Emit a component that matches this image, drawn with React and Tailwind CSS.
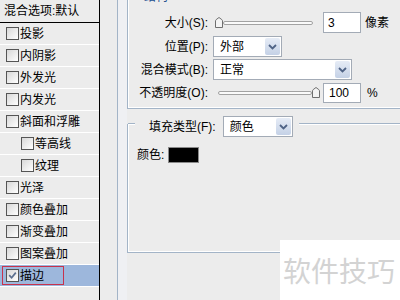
import React from "react";

// layer style list on the left
const effects = [
  { name: "投影" },
  { name: "内阴影" },
  { name: "外发光" },
  { name: "内发光" },
  { name: "斜面和浮雕" },
  { name: "等高线", sub: true },
  { name: "纹理", sub: true },
  { name: "光泽" },
  { name: "颜色叠加" },
  { name: "渐变叠加" },
  { name: "图案叠加" },
  { name: "描边", checked: true, active: true },
];

const CheckBox = ({ checked }) => (
  <span className="w-[13px] h-[13px] shrink-0 border border-[#555] bg-linear-to-br from-[#d8d8d8] to-white flex items-center justify-center">
    {checked && (
      <svg width="9" height="9" viewBox="0 0 9 9">
        <path d="M1.2 4.2 L3.6 6.8 L7.8 1.6" stroke="#5b6f8f" strokeWidth="1.7" fill="none" />
      </svg>
    )}
  </span>
);

const Thumb = () => (
  <svg width="8" height="11" viewBox="0 0 8 11" className="shrink-0">
    <path d="M0.5 4 Q0.5 3.2 1.2 2.6 L4 0.5 L6.8 2.6 Q7.5 3.2 7.5 4 V10.5 H0.5 Z" fill="#f4f4f4" stroke="#6f6f6f" />
  </svg>
);

const Track = () => (
  <div className="flex-1 h-[4px] rounded-full border border-[#a2a2a2] bg-[#fafafa]" />
);

const Select = ({ value, className }) => (
  <div className={`h-[21px] border border-[#a3abb6] bg-white flex items-center ${className}`}>
    <span className="flex-1 pl-[6px]">{value}</span>
    <span className="w-[15px] h-[17px] mr-[1px] rounded-[2px] bg-linear-to-b from-[#e6ecf6] to-[#c4d1e6] flex items-center justify-center">
      <svg width="9" height="6" viewBox="0 0 9 6">
        <path d="M1 1 L4.5 4.5 L8 1" stroke="#4f6386" strokeWidth="1.8" fill="none" />
      </svg>
    </span>
  </div>
);

const Line = ({ className = "" }) => (
  <div className={`h-[2px] border-t border-[#a3b4c7] border-b border-b-white ${className}`} />
);

export default function App() {
  return (
    <div className="relative w-[400px] h-[300px] overflow-hidden bg-[#ececec] flex text-[12px] leading-[14px] text-black font-['Liberation_Sans','Noto_Sans_CJK_SC',sans-serif]">
      {/* Left: style list */}
      <div className="w-[100px] shrink-0 border-r border-black flex flex-col">
        <div className="h-[23px] border-b border-black pl-[4px] flex items-center">
          混合选项:默认
        </div>
        {effects.map((e) => (
          <div
            key={e.name}
            className={`h-[22px] border-b border-white flex items-center ${
              e.active ? "bg-[#9db7dc]" : ""
            } ${e.sub ? "pl-[21px]" : "pl-[6px]"}`}
          >
            {e.active ? (
              <div className="-ml-[4px] w-[62px] h-[19px] border border-[#c7324d] pl-[3px] flex items-center gap-[1px]">
                <CheckBox checked />
                <span>{e.name}</span>
              </div>
            ) : (
              <div className="flex items-center gap-[1px]">
                <CheckBox checked={e.checked} />
                <span>{e.name}</span>
              </div>
            )}
          </div>
        ))}
      </div>

      {/* Right: stroke settings */}
      <div className="flex-1 ml-[17px] border-l border-[#a3b4c7] flex">
        <div className="w-[9px] shrink-0 bg-[#eff0f3]" />
        <div className="flex flex-col">
          {/* Structure group */}
          <div className="w-[300px] h-[119px] -mt-[10px] border-l border-b border-[#a3b4c7] shadow-[inset_1px_-1px_0_#fff] flex flex-col">
            <div className="h-[14px] flex items-center">
              <Line className="w-[15px]" />
              <span className="px-[1px] text-[#1d4f8f]">结构</span>
              <Line className="flex-1" />
            </div>

            <div className="h-[21px] mt-[8px] flex items-center">
              <span className="w-[80px] text-right">大小(S):</span>
              <div className="ml-[7px] w-[98px] flex items-center">
                <Thumb />
                <Track />
              </div>
              <div className="ml-[10px] w-[38px] h-[21px] border border-[#a3abb6] bg-white pl-[4px] flex items-center">3</div>
              <span className="ml-[4px]">像素</span>
            </div>

            <div className="h-[21px] mt-[3px] flex items-center">
              <span className="w-[80px] text-right">位置(P):</span>
              <Select value="外部" className="ml-[5px] w-[69px]" />
            </div>

            <div className="h-[21px] mt-[2px] flex items-center">
              <span className="w-[80px] text-right">混合模式(B):</span>
              <Select value="正常" className="ml-[5px] w-[139px]" />
            </div>

            <div className="h-[21px] mt-[2px] flex items-center">
              <span className="w-[80px] text-right">不透明度(O):</span>
              <div className="ml-[10px] w-[102px] flex items-center">
                <Track />
                <Thumb />
              </div>
              <div className="ml-[3px] w-[38px] h-[20px] border border-[#a3abb6] bg-white pl-[5px] flex items-center">100</div>
              <span className="ml-[6px]">%</span>
            </div>
          </div>

          {/* Fill type group */}
          <div className="w-[300px] h-[129px] mt-[15px] border-l border-b border-[#a3b4c7] shadow-[inset_1px_-1px_0_#fff] flex flex-col">
            <div className="-mt-[8px] h-[21px] flex items-center">
              <Line className="w-[7px] self-start mt-[7px]" />
              <span className="ml-[14px]">填充类型(F):</span>
              <Select value="颜色" className="ml-[7px] w-[70px]" />
              <Line className="flex-1 ml-[6px] self-start mt-[7px]" />
            </div>
            <div className="h-[16px] mt-[10px] pl-[9px] flex items-center">
              <span className="w-[31px]">颜色:</span>
              <div className="w-[31px] h-[16px] bg-black border border-[#8a8a8a]" />
            </div>
          </div>
        </div>
      </div>

      {/* watermark */}
      <div className="absolute right-0 bottom-0 w-[120px] h-[60px] bg-white pl-[3px] flex items-center text-[28px] leading-[32px] text-[#d3d3d3] font-['Noto_Sans_CJK_SC',sans-serif]">
        软件技巧
      </div>
    </div>
  );
}
